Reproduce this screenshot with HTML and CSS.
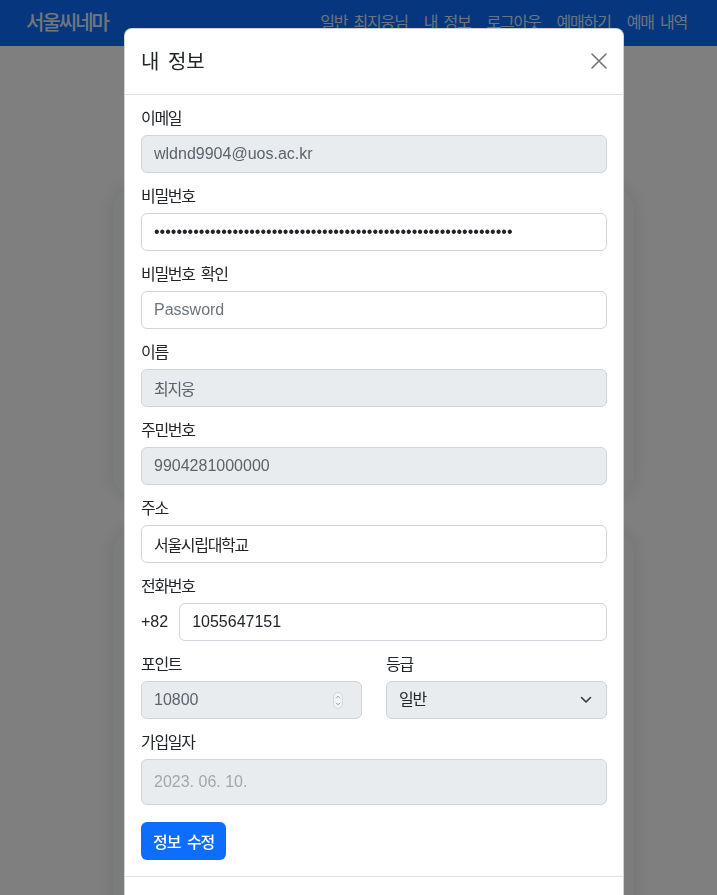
FILE: index.html
```html
<!DOCTYPE html>
<html lang="ko">
<head>
<meta charset="utf-8">
<title>서울씨네마 - 내 정보</title>
<link rel="stylesheet" href="styles.css">
</head>
<body>
<nav class="navbar">
  <a class="brand" href="#">서울씨네마</a>
  <div class="nav-links">
    <a href="#">일반 최지웅님</a>
    <a href="#">내 정보</a>
    <a href="#">로그아웃</a>
    <a href="#">예매하기</a>
    <a href="#">예매 내역</a>
  </div>
</nav>
<main class="page">
  <section class="card card-top"></section>
  <section class="card card-bottom"></section>
</main>
<div class="backdrop"></div>
<div class="modal">
  <div class="modal-content">
    <div class="modal-header">
      <h5 class="modal-title">내 정보</h5>
      <button class="btn-close" type="button" aria-label="Close">
        <svg width="16" height="16" viewBox="0 0 16 16"><path d="M1 1L15 15M15 1L1 15" stroke="#000" stroke-opacity="0.55" stroke-width="1.6" stroke-linecap="round" fill="none"/></svg>
      </button>
    </div>
    <form class="modal-body">
      <div class="group">
        <label class="form-label">이메일</label>
        <input class="field" type="text" value="wldnd9904@uos.ac.kr" disabled>
      </div>
      <div class="group">
        <label class="form-label">비밀번호</label>
        <input class="field pw" type="password" value="aaaaaaaaaaaaaaaaaaaaaaaaaaaaaaaaaaaaaaaaaaaaaaaaaaaaaaaaaaaaaaaa">
      </div>
      <div class="group">
        <label class="form-label">비밀번호 확인</label>
        <input class="field" type="password" placeholder="Password">
      </div>
      <div class="group">
        <label class="form-label">이름</label>
        <input class="field ko" type="text" value="최지웅" disabled>
      </div>
      <div class="group">
        <label class="form-label">주민번호</label>
        <input class="field" type="text" value="9904281000000" disabled>
      </div>
      <div class="group">
        <label class="form-label">주소</label>
        <input class="field ko" type="text" value="서울시립대학교">
      </div>
      <div class="group">
        <label class="form-label">전화번호</label>
        <div class="phone-row">
          <span class="prefix">+82</span>
          <input class="field" type="text" value="1055647151">
        </div>
      </div>
      <div class="group two-col">
        <div class="col">
          <label class="form-label">포인트</label>
          <div class="field disabled number-field">
            <input class="bare" type="text" value="10800" disabled>
            <svg class="spinner" width="10" height="17" viewBox="0 0 10 17"><rect x="0.5" y="0.5" width="9" height="16" rx="4.5" fill="#f1f3f5" stroke="#d3d7db"/><path d="M3 6.2L5 4.2L7 6.2M3 10.8L5 12.8L7 10.8" stroke="#8f959b" stroke-width="0.9" fill="none"/></svg>
          </div>
        </div>
        <div class="col">
          <label class="form-label">등급</label>
          <div class="field disabled select-field">
            <span class="ko">일반</span>
            <svg width="16" height="12" viewBox="0 0 16 12"><path d="M3.5 3.5l4.5 4.5 4.5-4.5" stroke="#343a40" stroke-width="1.6" fill="none" stroke-linecap="round" stroke-linejoin="round"/></svg>
          </div>
        </div>
      </div>
      <div class="group">
        <label class="form-label">가입일자</label>
        <input class="field date" type="text" value="2023. 06. 10." disabled>
      </div>
      <button class="btn-primary" type="button">정보 수정</button>
    </form>
    <div class="modal-footer"></div>
  </div>
</div>
</body>
</html>
```
FILE: styles.css
```css
* { box-sizing: border-box; }
html, body { margin: 0; height: 100%; overflow: hidden; }
body {
  font-family: "Liberation Sans", "Noto Sans CJK KR", sans-serif;
  font-size: 16px;
  line-height: 1.5;
  color: #212529;
  background: #ffffff;
}
.navbar {
  height: 46px;
  background: #0d6efd;
  display: flex;
  align-items: center;
  justify-content: space-between;
  padding: 0 22px 0 26px;
}
.brand {
  color: rgba(255,255,255,0.9);
  text-decoration: none;
  font-size: 20px;
  font-weight: 500;
  letter-spacing: -2px;
  line-height: 30px;
}
.nav-links { display: flex; }
.nav-links a {
  color: rgba(255,255,255,0.85);
  text-decoration: none;
  padding: 0 8px;
  font-size: 16px;
  letter-spacing: -1.2px;
  word-spacing: 3px;
  line-height: 24px;
}
.page {
  padding: 141px 0 0 30px;
  display: flex;
  flex-direction: column;
  align-items: center;
  gap: 33px;
}
.card {
  width: 521px;
  background: #f7f8f9;
  border-radius: 22px;
  box-shadow: 0 0 18px rgba(0,0,0,0.12);
}
.card-top { height: 310px; }
.card-bottom { height: 420px; }
.backdrop {
  position: fixed;
  inset: 0;
  background: rgba(0,0,0,0.5);
}
.modal {
  position: fixed;
  inset: 0;
  padding: 28px 0 0 31px;
  display: flex;
  justify-content: center;
  align-items: flex-start;
}
.modal-content {
  width: 500px;
  background: #fff;
  border: 1px solid rgba(0,0,0,0.175);
  border-radius: 8px;
}
.modal-header {
  height: 66px;
  padding: 0 16px;
  display: flex;
  align-items: center;
  justify-content: space-between;
  border-bottom: 1px solid #dee2e6;
}
.modal-title {
  margin: 0;
  font-size: 20px;
  font-weight: 400;
  line-height: 30px;
  word-spacing: 3px;
}
.btn-close {
  border: 0;
  background: none;
  padding: 0;
  width: 16px;
  height: 16px;
  display: flex;
  margin-top: -1px;
}
.modal-body {
  padding: 12px 16px 16px;
  margin: 0;
}
.group { margin-bottom: 12px; }
.form-label {
  display: block;
  line-height: 24px;
  margin-bottom: 4px;
  letter-spacing: -1.3px;
  word-spacing: 3px;
}
.field {
  display: block;
  width: 100%;
  height: 38px;
  padding: 6px 12px;
  font-family: inherit;
  font-size: 16px;
  line-height: 24px;
  color: #212529;
  background: #fff;
  border: 1px solid #ced4da;
  border-radius: 6px;
  outline: none;
}
.field::placeholder { color: #6c757d; opacity: 1; }
.field:disabled, .field.disabled {
  background: #e9ecef;
  color: #5c636a;
  opacity: 1;
}
.ko { letter-spacing: -1.3px; }
.pw { color: #212529; letter-spacing: 0; }
.phone-row {
  display: flex;
  align-items: center;
  gap: 11px;
}
.prefix { flex: none; }
.two-col {
  display: grid;
  grid-template-columns: minmax(0, 1fr) minmax(0, 1fr);
  column-gap: 24px;
}
.col { min-width: 0; }
.number-field {
  display: flex;
  align-items: center;
  padding-right: 18px;
}
.bare {
  flex: 1;
  width: 0;
  min-width: 0;
  border: 0;
  padding: 0;
  background: transparent;
  font-family: inherit;
  font-size: 16px;
  color: #5c636a;
}
.spinner { flex: none; }
.select-field {
  display: flex;
  align-items: center;
  justify-content: space-between;
}
.field.select-field.disabled { color: #212529; }
.date { height: 46px; }
.field.date:disabled { color: #a3a6a9; }
.btn-primary {
  display: block;
  margin-top: 17px;
  height: 38px;
  padding: 0 12px;
  border: 0;
  border-radius: 6px;
  background: #0d6efd;
  color: #fff;
  font-family: inherit;
  font-size: 16px;
  font-weight: 500;
  letter-spacing: -1px;
  word-spacing: 3px;
}
.modal-footer {
  height: 72px;
  border-top: 1px solid #dee2e6;
}
```
